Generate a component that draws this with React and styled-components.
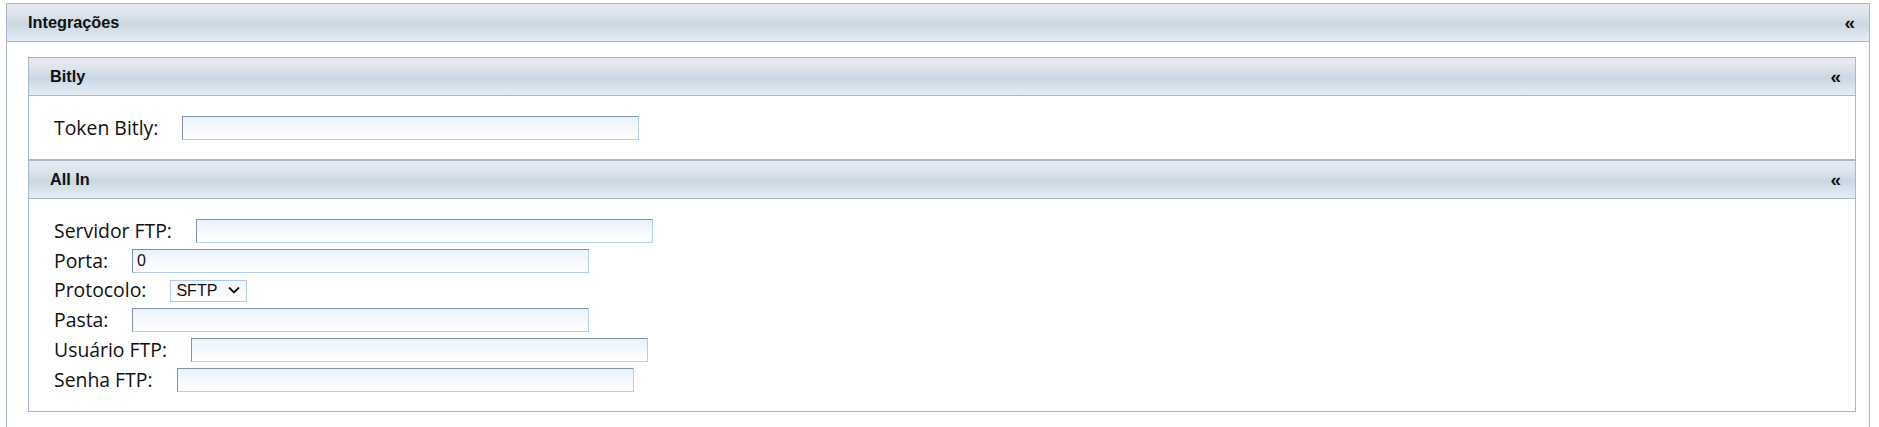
import React from 'react';
import styled, { createGlobalStyle } from 'styled-components';

const GlobalStyle = createGlobalStyle`
	html, body {
		margin: 0;
		padding: 0;
		background: #ffffff;
	}
	body {
		font-family: "Open Sans", "Liberation Sans", sans-serif;
		color: #111;
	}
`;

const Page = styled.div`
	padding: 3px 9px 0 6px;
`;

const Panel = styled.section`
	border: 1px solid #a9b8c8;
	background: #ffffff;
`;

const Header = styled.div`
	height: 37px;
	display: flex;
	align-items: center;
	justify-content: space-between;
	padding: 0 14px 0 21px;
	border-bottom: 1px solid #a9b8c8;
	background: linear-gradient(
		to bottom,
		#e6eaf0 0%,
		#dfe5ec 25%,
		#cad7e2 55%,
		#d9e4ee 80%,
		#e4edf6 100%
	);
	font-family: "Liberation Sans", Arial, sans-serif;
	font-weight: bold;
	font-size: 16.3px;
	color: #111;
`;

const Toggle = styled.span`
	font-family: "Liberation Sans", Arial, sans-serif;
	font-weight: bold;
	font-size: 19px;
	line-height: 1;
	color: #111;
	cursor: pointer;
`;

const OuterBody = styled.div`
	padding: 15px 13px 16px 21px;
`;

const Body = styled.div`
	padding: 20px 25px 19px 25px;
	display: flex;
	flex-direction: column;
	gap: 6px;
`;

const Row = styled.div`
	display: flex;
	align-items: ${(p) => (p.top ? 'flex-start' : 'center')};
	height: ${(p) => p.h || 24}px;
`;

const Label = styled.label`
	font-family: "Open Sans", sans-serif;
	font-size: 19.4px;
	color: #111;
	margin-right: 24px;
	white-space: nowrap;
	line-height: 22px;
`;

const Input = styled.input`
	box-sizing: border-box;
	width: 457px;
	height: 24px;
	padding: 0 4px;
	border: 1px solid;
	border-color: #8191a7 #b7cdec #b7cdec #8191a7;
	background: linear-gradient(to bottom, #eaf2fc 0%, #f6f9fe 55%, #ffffff 100%);
	font-family: "Liberation Sans", Arial, sans-serif;
	font-size: 16px;
	color: #111;
	outline: none;
`;

const SelectWrap = styled.div`
	position: relative;
	width: 77px;
	height: 22px;
`;

const Select = styled.select`
	appearance: none;
	box-sizing: border-box;
	width: 100%;
	height: 100%;
	padding: 0 0 0 5px;
	border: 1px solid #b4c9e8;
	background: linear-gradient(to bottom, #f3f7fd 0%, #ffffff 100%);
	font-family: "Liberation Sans", Arial, sans-serif;
	font-size: 16px;
	color: #111;
	outline: none;
`;

const Chevron = styled.svg`
	position: absolute;
	right: 7px;
	top: 7px;
	pointer-events: none;
`;

const SubPanel = ({ title, children }) => (
	<Panel>
		<Header>
			<span>{title}</span>
			<Toggle>«</Toggle>
		</Header>
		<Body>{children}</Body>
	</Panel>
);

const Field = ({ label, value = '' }) => (
	<Row>
		<Label>{label}</Label>
		<Input defaultValue={value} />
	</Row>
);

const App = () => (
	<>
		<GlobalStyle />
		<Page>
			<Panel>
				<Header>
					<span>Integrações</span>
					<Toggle>«</Toggle>
				</Header>
				<OuterBody>
					<SubPanel title="Bitly">
						<Field label="Token Bitly:" />
					</SubPanel>
					<SubPanel title="All In">
						<Field label="Servidor FTP:" />
						<Field label="Porta:" value="0" />
						<Row h={23} top>
							<Label>Protocolo:</Label>
							<SelectWrap>
								<Select defaultValue="SFTP">
									<option>SFTP</option>
									<option>FTP</option>
								</Select>
								<Chevron width="12" height="8" viewBox="0 0 12 8">
									<path d="M1 1.5 L6 6.5 L11 1.5" fill="none" stroke="#111" strokeWidth="1.8" />
								</Chevron>
							</SelectWrap>
						</Row>
						<Field label="Pasta:" />
						<Field label="Usuário FTP:" />
						<Field label="Senha FTP:" />
					</SubPanel>
				</OuterBody>
			</Panel>
		</Page>
	</>
);

export default App;
